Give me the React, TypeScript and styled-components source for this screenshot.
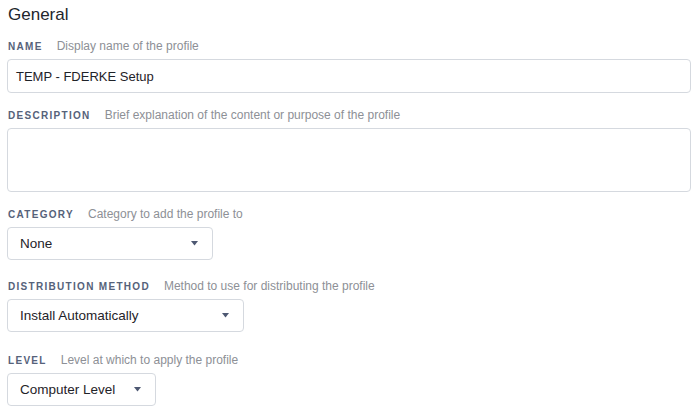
import React from "react";
import styled, { createGlobalStyle } from "styled-components";

const Global = createGlobalStyle`
  html, body { margin: 0; padding: 0; background: #fff; }
  body { font-family: "Liberation Sans", Arial, sans-serif; color: #1f2329; }
`;

const Page = styled.div`
  padding: 5px 9px 0 7px;
  display: flex;
  flex-direction: column;
`;

const Title = styled.h2`
  margin: 0 0 14px 1px;
  font-size: 17px;
  line-height: 20px;
  font-weight: 400;
  color: #22262b;
`;

const Field = styled.div<{ $after: number }>`
  display: flex;
  flex-direction: column;
  margin-bottom: ${(p) => p.$after}px;
`;

const LabelRow = styled.div`
  display: flex;
  align-items: center;
  gap: 14px;
  height: 14px;
  margin: 0 0 6px 1px;
`;

const Label = styled.span`
  font-size: 10px;
  font-weight: 700;
  letter-spacing: 1.3px;
  color: #56627a;
`;

const Hint = styled.span`
  font-size: 12px;
  color: #8d9096;
`;

const Box = styled.div<{ $h: number }>`
  box-sizing: border-box;
  height: ${(p) => p.$h}px;
  border: 1px solid #d5d9df;
  border-radius: 4px;
  background: #fff;
  display: flex;
  align-items: center;
  padding: 0 12px 0 8px;
  font-size: 13px;
  color: #1f2329;
`;

const Select = styled.div<{ $w: number }>`
  box-sizing: border-box;
  width: ${(p) => p.$w}px;
  height: 33px;
  border: 1px solid #d5d9df;
  border-radius: 4px;
  background: #fff;
  display: flex;
  align-items: center;
  justify-content: space-between;
  padding: 0 14px 0 12px;
  font-size: 13.5px;
  color: #1f2329;
`;

const Caret = () => (
  <svg width="7" height="5" viewBox="0 0 7 5">
    <path d="M0 0 H7 L3.5 4.5 Z" fill="#4d5872" />
  </svg>
);

export default function App() {
  return (
    <>
      <Global />
      <Page>
        <Title>General</Title>
        <Field $after={15}>
          <LabelRow>
            <Label>NAME</Label>
            <Hint>Display name of the profile</Hint>
          </LabelRow>
          <Box $h={34}>TEMP - FDERKE Setup</Box>
        </Field>
        <Field $after={15}>
          <LabelRow>
            <Label>DESCRIPTION</Label>
            <Hint>Brief explanation of the content or purpose of the profile</Hint>
          </LabelRow>
          <Box $h={64} />
        </Field>
        <Field $after={19}>
          <LabelRow>
            <Label>CATEGORY</Label>
            <Hint>Category to add the profile to</Hint>
          </LabelRow>
          <Select $w={206}>
            None
            <Caret />
          </Select>
        </Field>
        <Field $after={21}>
          <LabelRow>
            <Label>DISTRIBUTION METHOD</Label>
            <Hint>Method to use for distributing the profile</Hint>
          </LabelRow>
          <Select $w={237}>
            Install Automatically
            <Caret />
          </Select>
        </Field>
        <Field $after={0}>
          <LabelRow>
            <Label>LEVEL</Label>
            <Hint>Level at which to apply the profile</Hint>
          </LabelRow>
          <Select $w={149}>
            Computer Level
            <Caret />
          </Select>
        </Field>
      </Page>
    </>
  );
}
